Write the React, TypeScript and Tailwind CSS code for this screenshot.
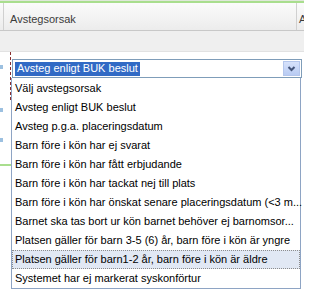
const items = [
  "Välj avstegsorsak",
  "Avsteg enligt BUK beslut",
  "Avsteg p.g.a. placeringsdatum",
  "Barn före i kön har ej svarat",
  "Barn före i kön har fått erbjudande",
  "Barn före i kön har tackat nej till plats",
  "Barn före i kön har önskat senare placeringsdatum (<3 m...",
  "Barnet ska tas bort ur kön barnet behöver ej barnomsor...",
  "Platsen gäller för barn 3-5 (6) år, barn före i kön är yngre",
  "Platsen gäller för barn1-2 år, barn före i kön är äldre",
  "Systemet har ej markerat syskonförtur",
];

const ACTIVE = 9;

function Chevron() {
  return (
    <svg width="9" height="6" viewBox="0 0 9 6" className="block">
      <path d="M1.5 1 L4.5 4 L7.5 1" fill="none" stroke="#44557a" strokeWidth="2" />
    </svg>
  );
}

export default function App() {
  return (
    <div
      className="relative w-[304px] h-[292px] overflow-hidden bg-white text-[11px] leading-none text-black"
      style={{ fontFamily: '"Liberation Sans", Arial, sans-serif' }}
    >
      {/* green top strip */}
      <div className="h-px bg-[#dfe8da]" />
      <div className="h-[2px] bg-[#a9de8e]" />

      {/* grid header */}
      <div className="flex h-[28px] border-b border-[#c8c8c8] bg-gradient-to-b from-[#fbfbfb] to-[#ececec]">
        <div className="w-[3px]" />
        <div className="w-px bg-[#d0d0d0]" />
        <div className="flex flex-1 items-center pl-[6px] pt-[5px] text-[#3c3c3c]">Avstegsorsak</div>
        <div className="w-px bg-[#d0d0d0]" />
        <div className="flex w-[7px] items-center overflow-hidden pl-[2px] pt-[5px] text-[#3c3c3c]">A</div>
      </div>

      {/* toolbar band */}
      <div className="h-[21px] border-b border-[#e2e2e2] bg-[#efefef]" />

      {/* body */}
      <div className="relative flex h-[240px]">
        <div className="relative w-[12px]">
          <div className="absolute left-0 top-[13px] h-[4px] w-[3px] bg-[#9cc0e0]" />
          <div className="absolute left-0 top-[56px] h-[4px] w-[3px] bg-[#9cc0e0]" />
          <div className="absolute left-0 top-[86px] h-[4px] w-[3px] bg-[#9cc0e0]" />
          <div className="absolute left-[10px] top-0 h-[48px] border-l border-dashed border-[#8a3030]" />
          <div className="absolute left-0 top-[112px] h-[2px] w-[12px] bg-[#a9de8e]" />
        </div>

        <div className="pt-[7px]">
          {/* select box */}
          <div className="flex h-[19px] w-[290px] items-stretch border border-[#7f9db9] bg-white">
            <div className="flex flex-1 items-center pl-[2px]">
              <span className="flex h-[14px] items-center bg-[#316ac5] px-[2px] text-white">
                Avsteg enligt BUK beslut
              </span>
            </div>
            <div className="my-px mr-px flex w-[17px] items-center justify-center border border-[#b4c6ec] bg-gradient-to-b from-[#d7e2fb] to-[#b8cbf3]">
              <Chevron />
            </div>
          </div>
        </div>
      </div>

      {/* open dropdown list */}
      <div className="absolute left-[11px] top-[78px] w-[290px] border border-[#8ea4c4] border-t-0 bg-white pt-px">
        {items.map((item, i) => (
          <div
            key={item}
            className={
              i === ACTIVE
                ? "flex h-[19px] items-center whitespace-nowrap border border-dotted border-[#8c8c8c] bg-[#e1e8f4] pl-[2px]"
                : "flex h-[19px] items-center whitespace-nowrap pl-[3px]"
            }
          >
            {item}
          </div>
        ))}
      </div>
    </div>
  );
}
